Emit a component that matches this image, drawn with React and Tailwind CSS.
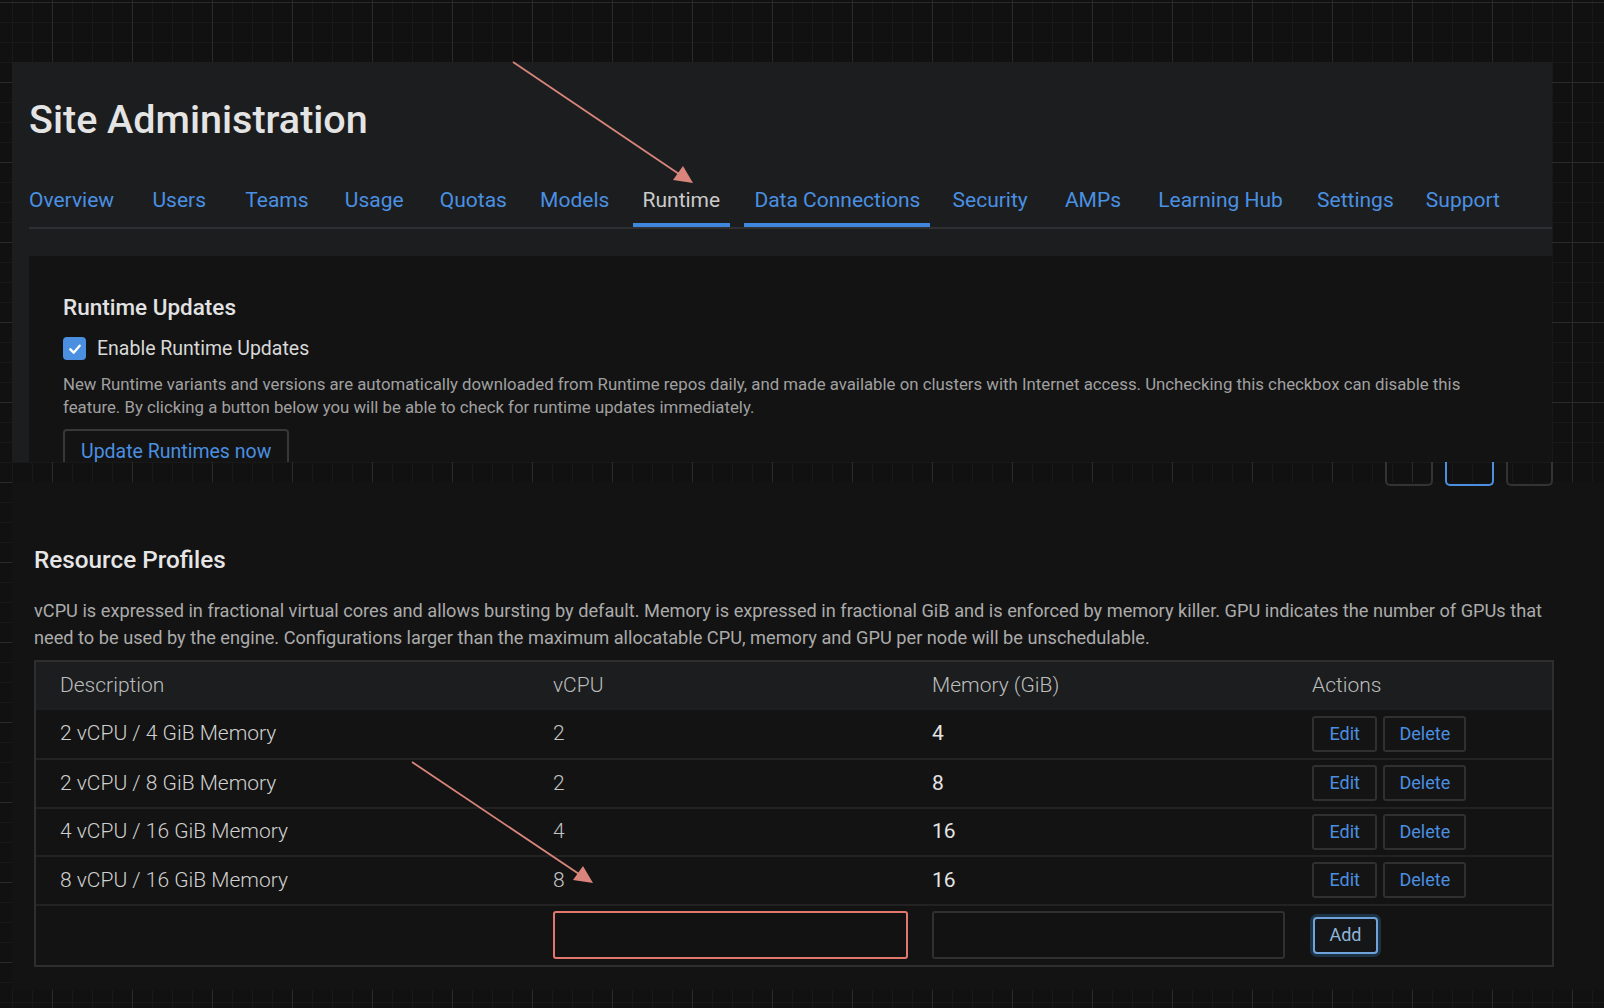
import React from "react";

const tabs = [
  { label: "Overview", state: "idle", ml: "ml-0" },
  { label: "Users", state: "idle", ml: "ml-[18.3px]" },
  { label: "Teams", state: "idle", ml: "ml-[19.3px]" },
  { label: "Usage", state: "idle", ml: "ml-[16.2px]" },
  { label: "Quotas", state: "idle", ml: "ml-[16.2px]" },
  { label: "Models", state: "idle", ml: "ml-[13.2px]" },
  { label: "Runtime", state: "active", ml: "ml-[13.2px]" },
  { label: "Data Connections", state: "hover", ml: "ml-[14.2px]" },
  { label: "Security", state: "idle", ml: "ml-[12.1px]" },
  { label: "AMPs", state: "idle", ml: "ml-[17.2px]" },
  { label: "Learning Hub", state: "idle", ml: "ml-[17.2px]" },
  { label: "Settings", state: "idle", ml: "ml-[14.2px]" },
  { label: "Support", state: "idle", ml: "ml-[12.1px]" },
];

const tabClass = {
  idle: "text-[#4a90e2] border-transparent",
  active: "text-[#cacaca] border-[#3f87dc]",
  hover: "text-[#4a90e2] border-[#3f87dc]",
};

const rows = [
  { d: "2 vCPU / 4 GiB Memory", c: "2", m: "4" },
  { d: "2 vCPU / 8 GiB Memory", c: "2", m: "8" },
  { d: "4 vCPU / 16 GiB Memory", c: "4", m: "16" },
  { d: "8 vCPU / 16 GiB Memory", c: "8", m: "16" },
];

function SmallBtn({ children, px }) {
  return (
    <button className={`h-[36px] ${px} rounded-[3px] border-2 border-[#303030] bg-[#141414] text-[18px] leading-none text-[#4a8fe0]`}>
      {children}
    </button>
  );
}

export default function App() {
  return (
    <div className="relative w-[1604px] h-[1008px] overflow-hidden font-['Roboto','Noto_Sans',sans-serif] bg-[#111111] bg-[linear-gradient(to_right,#2b2b2b_1px,transparent_1px),linear-gradient(to_bottom,#2b2b2b_1px,transparent_1px),linear-gradient(to_right,#191919_1px,transparent_1px),linear-gradient(to_bottom,#191919_1px,transparent_1px)] bg-[size:80px_80px,80px_80px,20px_20px,20px_20px] bg-[position:52px_2px,52px_2px,12px_2px,12px_2px]">
      {/* Upper panel */}
      <div className="pt-[62px] pl-[12px]">
        <div className="w-[1540px] h-[400px] overflow-hidden bg-[#1c1d1f] pl-[17px] pt-[35px]">
          <h1 className="text-[39.5px] leading-[46px] font-medium text-[#e4e4e4] mb-[45px]">
            Site Administration
          </h1>
          <div className="border-b-2 border-[#2e3033]">
            <div className="flex -ml-[10px]">
              {tabs.map((t) => (
                <div
                  key={t.label}
                  className={`${t.ml} px-[10px] pb-[10.5px] border-b-4 text-[21px] leading-[24px] whitespace-nowrap ${tabClass[t.state]}`}
                >
                  {t.label}
                </div>
              ))}
            </div>
          </div>
          <div className="mt-[27px] h-[300px] bg-[#131313] pl-[34px] pt-[38px]">
            <h2 className="text-[22.5px] leading-[26px] font-medium text-[#e2e2e2]">Runtime Updates</h2>
            <label className="mt-[17px] flex items-center gap-[11px] h-[24px]">
              <span className="w-[23px] h-[23px] rounded-[4px] bg-[#4a8fe0] flex items-center justify-center">
                <svg width="16" height="16" viewBox="0 0 24 24" fill="none" stroke="#ffffff" strokeWidth="3.5" strokeLinecap="round" strokeLinejoin="round">
                  <polyline points="5,12.5 10,17.5 19,7" />
                </svg>
              </span>
              <span className="text-[19.5px] leading-[24px] text-[#d8d8d8]">Enable Runtime Updates</span>
            </label>
            <p className="mt-[12px] text-[16.8px] leading-[23.3px] text-[#a0a0a0] whitespace-nowrap">
              New Runtime variants and versions are automatically downloaded from Runtime repos daily, and made available on clusters with Internet access. Unchecking this checkbox can disable this
              <br />
              feature. By clicking a button below you will be able to check for runtime updates immediately.
            </p>
            <button className="mt-[10px] h-[48px] px-[16px] pt-[9px] pb-[13px] rounded-[4px] border-2 border-[#383838] text-[19.5px] leading-[24px] text-[#4a8fe0]">
              Update Runtimes now
            </button>
          </div>
        </div>
      </div>

      {/* peeking button bottoms */}
      <div className="relative z-10 h-[20px] flex justify-end gap-[12px] pr-[51px]">
        <div className="w-[48px] h-[24px] border-2 border-t-0 border-[#333333] rounded-b-[5px]" />
        <div className="w-[49px] h-[24px] border-2 border-t-0 border-[#4a8fe0] rounded-b-[5px]" />
        <div className="w-[47px] h-[24px] border-2 border-t-0 border-[#333333] rounded-b-[5px]" />
      </div>

      {/* Lower panel */}
      <div className="ml-[12px] h-[508px] bg-[#131313] pl-[22px] pr-[50px] pt-[63px]">
        <h2 className="text-[24.3px] leading-[29px] font-medium text-[#e6e6e6]">Resource Profiles</h2>
        <p className="mt-[24px] text-[18.2px] leading-[26.6px] text-[#ababab] whitespace-nowrap">
          vCPU is expressed in fractional virtual cores and allows bursting by default. Memory is expressed in fractional GiB and is enforced by memory killer. GPU indicates the number of GPUs that
          <br />
          need to be used by the engine. Configurations larger than the maximum allocatable CPU, memory and GPU per node will be unschedulable.
        </p>
        <div className="mt-[9px] border-2 border-[#2e2e2e]">
          <div className="grid grid-cols-[493px_379px_380px_1fr] h-[48px] items-center bg-[#1c1d1f] text-[21px] font-light text-[#bdbdbd]">
            <div className="pl-6">Description</div>
            <div className="pl-6">vCPU</div>
            <div className="pl-6">Memory (GiB)</div>
            <div className="pl-6">Actions</div>
          </div>
          {rows.map((r, i) => (
            <div
              key={i}
              className={`grid grid-cols-[493px_379px_380px_1fr] items-center text-[21px] ${i === 0 ? "h-[48px]" : "h-[48.5px] border-t-2 border-[#222222]"}`}
            >
              <div className="pl-6 font-light text-[#d0d0d0]">{r.d}</div>
              <div className="pl-6 font-light text-[#c4c4c4]">{r.c}</div>
              <div className="pl-6 text-[#e4e4e4]">{r.m}</div>
              <div className="pl-6 flex gap-[6px]">
                <SmallBtn px="px-[15.5px]">Edit</SmallBtn>
                <SmallBtn px="px-[14px]">Delete</SmallBtn>
              </div>
            </div>
          ))}
          <div className="grid grid-cols-[493px_379px_380px_1fr] items-center h-[61px] border-t-2 border-[#222222]">
            <div />
            <div className="pl-6">
              <div className="h-[48px] rounded-[3px] border-2 border-[#e2776e] bg-[#121212]" />
            </div>
            <div className="pl-6 pr-[3px]">
              <div className="h-[48px] rounded-[3px] border-2 border-[#303030] bg-[#121212]" />
            </div>
            <div className="pl-[25px]">
              <button className="w-[65px] h-[37px] rounded-[4px] border-2 border-[#6fa3d9] bg-[#141618] ring-[3px] ring-[#1c3245] text-[18px] leading-none text-[#8fb4da]">
                Add
              </button>
            </div>
          </div>
        </div>
      </div>

      {/* annotation arrows */}
      <svg className="absolute inset-0 pointer-events-none" width="1604" height="1008" viewBox="0 0 1604 1008">
        <line x1="513" y1="62" x2="679" y2="174" stroke="#d9857c" strokeWidth="1.8" />
        <polygon points="693,183 673,180 683,166" fill="#d9857c" />
        <line x1="412" y1="762" x2="579" y2="874" stroke="#d9857c" strokeWidth="1.8" />
        <polygon points="593,883 573,880 583,866" fill="#d9857c" />
      </svg>
    </div>
  );
}
